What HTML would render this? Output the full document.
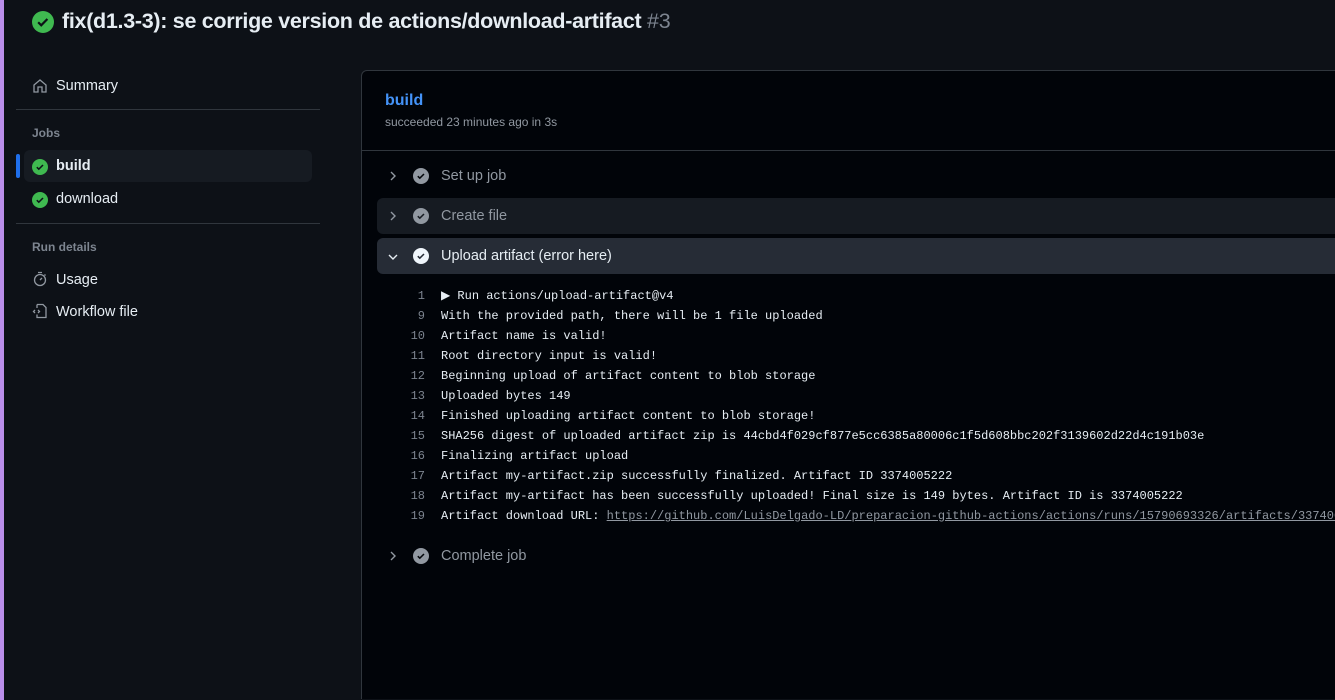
<!DOCTYPE html>
<html style="overflow:hidden;height:700px"><head><style>
body{margin:0;width:1335px;height:700px;background:#0d1117;font-family:"Liberation Sans",sans-serif;color:#e6edf3;overflow:hidden;position:relative}
.strip{position:absolute;left:0;top:0;width:4px;height:700px;background:#b98eea}
.title{position:absolute;left:32px;top:9px;font-size:21.5px;font-weight:bold;letter-spacing:-0.3px}
.title span{color:#7d8590;font-weight:normal}
.ic{position:absolute}
.nav{position:absolute;left:56px;font-size:14.5px;color:#e6edf3}
.hr{position:absolute;left:16px;width:304px;height:1px;background:#30363d}
.lbl{position:absolute;left:32px;font-size:12px;font-weight:bold;color:#7d8590}
.card{position:absolute;left:361px;top:70px;width:990px;height:628px;background:#010409;border:1px solid #30363d;border-bottom:none;border-radius:6px 0 0 0}
.row{position:absolute;left:377px;width:970px;height:36px;border-radius:6px;font-size:14.5px;color:#9198a1}
.row .t{position:absolute;left:64px;top:10px}
.log{position:absolute;left:385px;top:288px;font-family:"Liberation Mono",monospace;font-size:12px;color:#e6edf3;white-space:nowrap}
.log div{height:20px;line-height:16px}
.log b{display:inline-block;width:40px;text-align:right;color:#7d8590;font-weight:normal;margin-right:16px}
.log a{color:#9198a1;text-decoration:underline}
</style></head><body>
<div class="strip"></div>
<svg class="ic" style="left:32px;top:11px" width="22" height="22" viewBox="0 0 16 16"><circle cx="8" cy="8" r="8" fill="#3fb950"/><path d="M4.5 8.2l2.2 2.2 4.5-4.6" stroke="#0d1117" stroke-width="1.6" fill="none"/></svg>
<div class="title" style="left:62px">fix(d1.3-3): se corrige version de actions/download-artifact <span>#3</span></div>

<svg class="ic" style="left:32px;top:78px" width="16" height="16" viewBox="0 0 16 16" fill="none" stroke="#9198a1" stroke-width="1.3"><path d="M2 7l6-5 6 5v7H10V9H6v5H2z"/></svg>
<div class="nav" style="top:78px">Summary</div>
<div class="hr" style="top:109px"></div>
<div class="lbl" style="top:126px">Jobs</div>
<div style="position:absolute;left:24px;top:150px;width:288px;height:32px;background:#161b22;border-radius:6px"></div>
<div style="position:absolute;left:16px;top:154px;width:4px;height:24px;background:#1f6feb;border-radius:2px"></div>
<svg class="ic" style="left:32px;top:159px" width="16" height="16" viewBox="0 0 16 16"><circle cx="8" cy="8" r="8" fill="#3fb950"/><path d="M4.8 8.2l2 2 4.2-4.2" stroke="#0d1117" stroke-width="1.5" fill="none"/></svg>
<div class="nav" style="top:158px;font-weight:bold">build</div>
<svg class="ic" style="left:32px;top:192px" width="16" height="16" viewBox="0 0 16 16"><circle cx="8" cy="8" r="8" fill="#3fb950"/><path d="M4.8 8.2l2 2 4.2-4.2" stroke="#0d1117" stroke-width="1.5" fill="none"/></svg>
<div class="nav" style="top:191px">download</div>
<div class="hr" style="top:223px"></div>
<div class="lbl" style="top:240px">Run details</div>
<svg class="ic" style="left:32px;top:271px" width="16" height="16" viewBox="0 0 16 16" fill="none" stroke="#9198a1" stroke-width="1.3"><circle cx="8" cy="9" r="5.5"/><path d="M6 1.5h4M8 9l2-2M12.5 3.5l1 1"/></svg>
<div class="nav" style="top:272px">Usage</div>
<svg class="ic" style="left:32px;top:303px" width="16" height="16" viewBox="0 0 16 16" fill="none" stroke="#9198a1" stroke-width="1.3"><path d="M5 1.5h6l3 3v10H5v-3M5 5V1.5M3 7L1.5 8.5 3 10M6 7l1.5 1.5L6 10"/></svg>
<div class="nav" style="top:304px">Workflow file</div>

<div class="card"></div>
<div style="position:absolute;left:385px;top:92px;font-size:16px;font-weight:bold;color:#4493f8">build</div>
<div style="position:absolute;left:385px;top:115px;font-size:12px;color:#9198a1">succeeded 23 minutes ago in 3s</div>
<div style="position:absolute;left:362px;top:150px;width:990px;height:1px;background:#30363d"></div>

<div class="row" style="top:158px"><svg class="ic" style="left:10px;top:12px" width="12" height="12" viewBox="0 0 12 12"><path d="M4 2l4 4-4 4" stroke="#9198a1" stroke-width="1.4" fill="none"/></svg><svg class="ic" style="left:36px;top:10px" width="16" height="16" viewBox="0 0 16 16"><circle cx="8" cy="8" r="8" fill="#9198a1"/><path d="M4.8 8.2l2 2 4.2-4.2" stroke="#010409" stroke-width="1.5" fill="none"/></svg><span class="t">Set up job</span></div>
<div class="row" style="top:198px;background:#161b22"><svg class="ic" style="left:10px;top:12px" width="12" height="12" viewBox="0 0 12 12"><path d="M4 2l4 4-4 4" stroke="#9198a1" stroke-width="1.4" fill="none"/></svg><svg class="ic" style="left:36px;top:10px" width="16" height="16" viewBox="0 0 16 16"><circle cx="8" cy="8" r="8" fill="#9198a1"/><path d="M4.8 8.2l2 2 4.2-4.2" stroke="#161b22" stroke-width="1.5" fill="none"/></svg><span class="t">Create file</span></div>
<div class="row" style="top:238px;background:#262c36;color:#e6edf3"><svg class="ic" style="left:10px;top:13px" width="12" height="12" viewBox="0 0 12 12"><path d="M2 4l4 4 4-4" stroke="#e6edf3" stroke-width="1.4" fill="none"/></svg><svg class="ic" style="left:36px;top:10px" width="16" height="16" viewBox="0 0 16 16"><circle cx="8" cy="8" r="8" fill="#f0f6fc"/><path d="M4.8 8.2l2 2 4.2-4.2" stroke="#262c36" stroke-width="1.5" fill="none"/></svg><span class="t">Upload artifact (error here)</span></div>

<div class="log"><div><b>1</b>▶ Run actions/upload-artifact@v4</div><div><b>9</b>With the provided path, there will be 1 file uploaded</div><div><b>10</b>Artifact name is valid!</div><div><b>11</b>Root directory input is valid!</div><div><b>12</b>Beginning upload of artifact content to blob storage</div><div><b>13</b>Uploaded bytes 149</div><div><b>14</b>Finished uploading artifact content to blob storage!</div><div><b>15</b>SHA256 digest of uploaded artifact zip is 44cbd4f029cf877e5cc6385a80006c1f5d608bbc202f3139602d22d4c191b03e</div><div><b>16</b>Finalizing artifact upload</div><div><b>17</b>Artifact my-artifact.zip successfully finalized. Artifact ID 3374005222</div><div><b>18</b>Artifact my-artifact has been successfully uploaded! Final size is 149 bytes. Artifact ID is 3374005222</div><div><b>19</b>Artifact download URL: <a>https://github.com/LuisDelgado-LD/preparacion-github-actions/actions/runs/15790693326/artifacts/3374005222</a></div></div>

<div class="row" style="top:538px"><svg class="ic" style="left:10px;top:12px" width="12" height="12" viewBox="0 0 12 12"><path d="M4 2l4 4-4 4" stroke="#9198a1" stroke-width="1.4" fill="none"/></svg><svg class="ic" style="left:36px;top:10px" width="16" height="16" viewBox="0 0 16 16"><circle cx="8" cy="8" r="8" fill="#9198a1"/><path d="M4.8 8.2l2 2 4.2-4.2" stroke="#010409" stroke-width="1.5" fill="none"/></svg><span class="t">Complete job</span></div>
</body></html>
